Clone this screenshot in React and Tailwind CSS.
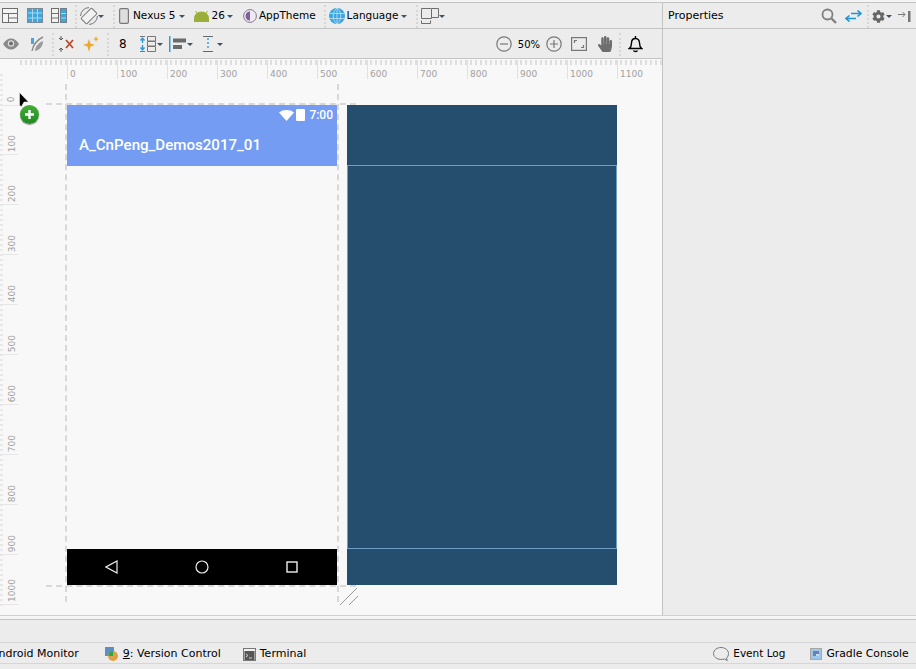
import { FaCog, FaHandPaper } from "react-icons/fa"

const hLabels = [0, 100, 200, 300, 400, 500, 600, 700, 800, 900, 1000, 1100]
const vLabels = [100, 200, 300, 400, 500, 600, 700, 800, 900, 1000]

function Caret({ className = "ml-[3px]" }) {
  return <span className={`${className} w-0 h-0 border-x-[3px] border-t-[3px] border-x-transparent border-t-[#3d5566]`} />
}

function Sep({ className = "" }) {
  return <span className={`${className} w-0 h-[23px] border-l-2 border-dotted border-[#d6d6d6]`} />
}

function DesignIcon() {
  return (
    <svg width="16" height="16" viewBox="0 0 16 16" fill="none" stroke="#6e6e6e">
      <rect x="0.5" y="0.5" width="15" height="14" fill="#f4f4f4" />
      <path d="M0.5 5.5h15M6.5 5.5v9M6.5 10h9" />
    </svg>
  )
}

function BlueprintIcon() {
  return (
    <svg width="16" height="16" viewBox="0 0 16 16">
      <rect x="0.5" y="0.5" width="15" height="14" fill="#3fa6dd" stroke="#7a8b96" />
      <path d="M1 5h14M1 10h14M5.500 1v13M10.500 1v13" stroke="#a8d8f0" strokeWidth="1" />
    </svg>
  )
}

function BothIcon() {
  return (
    <svg width="16" height="16" viewBox="0 0 16 16" fill="none">
      <rect x="0.5" y="0.5" width="7" height="14" fill="#f2f2f2" stroke="#6e6e6e" />
      <path d="M0.5 5.500h7M0.5 10h7" stroke="#6e6e6e" />
      <rect x="9.500" y="0.500" width="6" height="14" fill="#3fa6dd" stroke="#6e7f8a" />
      <path d="M10 5.500h5M10 10h5" stroke="#a8d8f0" />
    </svg>
  )
}

function RotateIcon() {
  return (
    <svg width="18" height="18" viewBox="0 0 18 18" fill="none" stroke="#777">
      <rect x="5" y="1.500" width="8" height="15" rx="1" transform="rotate(45 9 9)" fill="#f2f2f2" />
      <path d="M9 .6a8.400 8.400 0 0 0-8.400 8.400M9 17.400a8.400 8.400 0 0 0 8.400-8.400" />
    </svg>
  )
}

function PhoneIcon() {
  return (
    <svg width="10" height="16" viewBox="0 0 10 16" fill="#dedede" stroke="#777" strokeWidth="1.200">
      <rect x="0.600" y="0.600" width="8.800" height="14.800" rx="1.400" />
    </svg>
  )
}

function AndroidIcon() {
  return (
    <svg width="15" height="11" viewBox="0 0 15 11" fill="#9bae3a">
      <path d="M0 11V7.500a7.500 7 0 0 1 15 0V11z" />
      <path d="M1.500 0l3 4M13.500 0l-3 4" stroke="#9bae3a" strokeWidth="1" />
    </svg>
  )
}

function ThemeIcon() {
  return (
    <svg width="14" height="14" viewBox="0 0 14 14">
      <circle cx="7" cy="7" r="6.400" fill="#eee9f2" stroke="#85768f" />
      <path d="M7 2.500a4.500 4.500 0 0 0 0 9z" fill="#7f5f9c" />
    </svg>
  )
}

function GlobeIcon() {
  return (
    <svg width="16" height="16" viewBox="0 0 16 16" fill="none">
      <circle cx="8" cy="8" r="8" fill="#3da5df" />
      <path d="M0.500 5.500h15M0.500 10.500h15M8 0v16M8 0c-5 4-5 12 0 16M8 0c5 4 5 12 0 16" stroke="#bfe3f6" strokeWidth="0.800" />
    </svg>
  )
}

function LayoutIcon() {
  return (
    <svg width="18" height="18" viewBox="0 0 18 18" fill="none" stroke="#6e6e6e">
      <path d="M0.500 1.500h10v10h-10zM11 1.500h6.500v9H11M0.500 13.500v3h9v-3" />
    </svg>
  )
}

function EyeIcon() {
  return (
    <svg width="16" height="12" viewBox="0 0 16 12">
      <path d="M0 6c2-3.500 5-5.500 8-5.500S14 2.500 16 6c-2 3.500-5 5.500-8 5.500S2 9.500 0 6z" fill="#8a8a8a" />
      <circle cx="8" cy="5.500" r="3.200" fill="#dcdcdc" />
      <circle cx="8" cy="5.500" r="2" fill="#6e6e6e" />
    </svg>
  )
}

function AutoconnectIcon() {
  return (
    <svg width="14" height="16" viewBox="0 0 14 16" fill="none">
      <path d="M1 2h3v6H1z" fill="#4aa3d9" />
      <path d="M13 1C7 4 3 9 2 15" stroke="#8a8a8a" strokeWidth="1.400" />
      <path d="M13 5c0 5-3 9-8 10 0-4 3-8 8-10z" fill="#9a9a9a" />
    </svg>
  )
}

function ClearIcon() {
  return (
    <svg width="16" height="16" viewBox="0 0 16 16" fill="none">
      <path d="M3 0v4M1 2l2 2 2-2M3 16v-4M1 14l2-2 2 2" stroke="#555" strokeWidth="1" />
      <path d="M8 4l7 8M15 4l-7 8" stroke="#b8492f" strokeWidth="1.800" />
    </svg>
  )
}

function InferIcon() {
  return (
    <svg width="16" height="16" viewBox="0 0 16 16" fill="#eea82a">
      <path d="M6 3l1.500 4.500L12 9l-4.500 1.500L6 16l-1.500-5.500L0 9l4.500-1.500z" />
      <path d="M13 0l.8 2.200L16 3l-2.200.8L13 6l-.8-2.200L10 3l2.200-.8z" />
    </svg>
  )
}

function MarginIcon() {
  return (
    <svg width="17" height="16" viewBox="0 0 17 16" fill="none">
      <path d="M1 .5h5" stroke="#777" />
      <path d="M3.500 2v5M1.500 4.500l2-2.500 2 2.500" stroke="#2f9bd8" strokeWidth="1.400" />
      <path d="M3.500 14v-5M1.500 11.500l2 2.500 2-2.500" stroke="#2f9bd8" strokeWidth="1.400" />
      <path d="M1 15.500h5" stroke="#777" />
      <path d="M8.500 0.500h8v4.500h-8zM8.500 5.500h8v4.500h-8zM8.500 10.500h8v5h-8z" stroke="#777" />
    </svg>
  )
}

function AlignIcon() {
  return (
    <svg width="17" height="16" viewBox="0 0 17 16">
      <rect x="0" y="0" width="1.500" height="16" fill="#2f9bd8" />
      <rect x="4" y="2.500" width="13" height="4" fill="#6a6a6a" />
      <rect x="4" y="9" width="9" height="4" fill="#6a6a6a" />
    </svg>
  )
}

function GuideIcon() {
  return (
    <svg width="10" height="16" viewBox="0 0 10 16" fill="none">
      <path d="M0 .5h10M0 15.500h10" stroke="#666" />
      <path d="M5 2v12" stroke="#2f9bd8" strokeWidth="1.400" strokeDasharray="2 2" />
    </svg>
  )
}

function BellIcon() {
  return (
    <svg width="15" height="17" viewBox="0 0 15 17" fill="none" stroke="#000" strokeWidth="1.400">
      <path d="M7.500 2.500c-2.800 0-4 2-4 4.500 0 3-.9 4.500-2.200 5.500h12.400c-1.300-1-2.200-2.500-2.200-5.500 0-2.500-1.200-4.500-4-4.500z" />
      <path d="M7.500 0v2.500M5.500 14.500c.5 1.300 3.500 1.300 4 0" />
    </svg>
  )
}

function SearchIcon() {
  return (
    <svg width="16" height="16" viewBox="0 0 16 16" fill="none" stroke="#808080">
      <circle cx="6.500" cy="6.500" r="5" strokeWidth="1.800" />
      <path d="M10.500 10.500l4.500 4.500" strokeWidth="2.400" />
    </svg>
  )
}

function SwapIcon() {
  return (
    <svg width="17" height="12" viewBox="0 0 17 12" fill="none" stroke="#1f95d6" strokeWidth="1.600">
      <path d="M6 3.500h10M12.500 .5l3.500 3-3.500 3" />
      <path d="M11 8.500H1M4.500 5.500l-3.500 3 3.500 3" />
    </svg>
  )
}

function PinIcon() {
  return (
    <svg width="13" height="11" viewBox="0 0 13 11" fill="none" stroke="#777">
      <path d="M0 3.500h7M4.500 1l2.500 2.500L4.500 6" />
      <rect x="10" y="0" width="2.500" height="11" fill="#777" stroke="none" />
    </svg>
  )
}

function MonitorIcon() {
  return (
    <svg width="14" height="14" viewBox="0 0 14 14">
      <rect x="0" y="0" width="9" height="9" fill="#5f8fc0" />
      <circle cx="8" cy="9" r="5" fill="#e0a048" />
      <path d="M8 4a4.500 4.500 0 0 0-4.500 5H8z" fill="#2aa84a" />
    </svg>
  )
}

function TerminalIcon() {
  return (
    <svg width="13" height="13" viewBox="0 0 13 13">
      <rect x="0.500" y="0.500" width="12" height="12" fill="#f0f0f0" stroke="#777" />
      <rect x="1.500" y="3" width="10" height="9" fill="#555" />
      <path d="M3 6l2 1.500L3 9M6 10h3" stroke="#eee" strokeWidth="0.800" fill="none" />
    </svg>
  )
}

function GradleIcon() {
  return (
    <svg width="12" height="12" viewBox="0 0 12 12">
      <rect x="0" y="0" width="12" height="12" fill="#a8a8a8" />
      <rect x="1" y="1" width="10" height="10" fill="#9bc7e8" />
      <rect x="3" y="3" width="6" height="5" fill="#6f7fb4" />
      <rect x="6" y="6" width="3" height="2" fill="#c9d9ea" />
    </svg>
  )
}

function BubbleIcon() {
  return (
    <svg width="16" height="15" viewBox="0 0 16 15" fill="none" stroke="#777">
      <path d="M8 .5c4 0 7.500 2.500 7.500 6 0 2-.8 3.500-2 4.500l.8 2.500-3-1.500C6 13.500 .5 11 .5 6.500 .5 3 4 .5 8 .5z" />
    </svg>
  )
}

function Cursor() {
  return (
    <svg className="absolute left-[18px] top-[33px]" width="12" height="17" viewBox="0 0 12 17">
      <path d="M1.500 0.500l9 9.500H6l-2.500 4.500-2-1z" fill="#000" stroke="#fff" strokeWidth="0.500" />
    </svg>
  )
}

function AddBadge() {
  return (
    <div className="absolute left-[20px] top-[46px] w-[19px] h-[19px] rounded-full bg-gradient-to-b from-[#43ad38] to-[#1f8a20] shadow-[0_1px_1px_rgba(0,0,0,0.4)] flex items-center justify-center">
      <svg width="11" height="11" viewBox="0 0 11 11" fill="#fff">
        <path d="M4.300 1h2.400v3.300H10v2.400H6.700V10H4.300V6.700H1V4.300h3.300z" />
      </svg>
    </div>
  )
}

function NavBar() {
  return (
    <div className="h-[36px] bg-black flex items-center">
      <svg className="ml-[38px]" width="13" height="14" viewBox="0 0 13 14" fill="none" stroke="#eee" strokeWidth="1.200">
        <path d="M12 1v12L1 7z" />
      </svg>
      <svg className="ml-[77px]" width="14" height="14" viewBox="0 0 14 14" fill="none" stroke="#eee" strokeWidth="1.200">
        <circle cx="7" cy="7" r="6" />
      </svg>
      <svg className="ml-[77px]" width="12" height="12" viewBox="0 0 12 12" fill="none" stroke="#eee" strokeWidth="1.400">
        <rect x="1" y="1" width="10" height="10" />
      </svg>
    </div>
  )
}

function Phone() {
  return (
    <div className="absolute left-[67px] top-[46px] w-[270px] h-[480px] flex flex-col">
      <div className="h-[61px] bg-[#739cf2] flex flex-col text-white font-['Roboto',sans-serif]">
        <div className="h-[20px] flex items-center justify-end pr-[4px] gap-[2px]">
          <svg width="15" height="11" viewBox="0 0 15 11" fill="#fff">
            <path d="M0 2.500C2 .8 4.700 0 7.500 0S13 .8 15 2.500L7.500 11z" />
          </svg>
          <span className="w-[9px] h-[12px] bg-white rounded-[1px]" />
          <span className="ml-[2px] text-[12px] font-medium">7:00</span>
        </div>
        <div className="pl-[12px] mt-[10px] text-[15.100px] font-medium leading-[20px]">A_CnPeng_Demos2017_01</div>
      </div>
      <div className="flex-1 bg-[#f8f8f8]" />
      <NavBar />
    </div>
  )
}

function Blueprint() {
  return (
    <div className="absolute left-[347px] top-[46px] w-[270px] h-[480px] bg-[#254d6e] flex flex-col">
      <div className="h-[60px]" />
      <div className="h-[384px] border border-[#6f9fc4]" />
    </div>
  )
}

function Guides() {
  return (
    <>
      <div className="absolute left-[65px] top-[25px] h-[518px] border-l-2 border-dashed border-[#d8d8d8]" />
      <div className="absolute left-[337px] top-[25px] h-[518px] border-l-2 border-dashed border-[#d8d8d8]" />
      <div className="absolute left-[46px] top-[44px] w-[310px] border-t-2 border-dashed border-[#d8d8d8]" />
      <div className="absolute left-[46px] top-[526px] w-[310px] border-t-2 border-dashed border-[#d8d8d8]" />
      <svg className="absolute left-[340px] top-[528px]" width="18" height="18" viewBox="0 0 18 18" fill="none" stroke="#999">
        <path d="M0 18L17 1M9 18l9-9" />
      </svg>
    </>
  )
}

function Rulers() {
  return (
    <>
      <div className="absolute left-[20px] top-[1px] right-0 h-[5px] bg-[repeating-linear-gradient(90deg,#dedede_0,#dedede_2px,transparent_2px,transparent_5px)]" />
      <div className="absolute left-[67px] top-[1px] flex font-['DejaVu_Sans',sans-serif] text-[9px] text-[#a0a0a0]">
        {hLabels.map((n) => (
          <div key={n} className="w-[50px] h-[19px] border-l border-[#e0e0e0] pl-[2px] pt-[9px] leading-[11px]">{n}</div>
        ))}
      </div>
      <div className="absolute left-0 top-[15px] w-[3px] bottom-[8px] bg-[repeating-linear-gradient(180deg,#e8e8e8_0,#e8e8e8_2px,transparent_2px,transparent_5px)]" />
      <div className="absolute left-[9px] top-[35px] text-[9px] leading-[11px] text-[#a0a0a0] font-['DejaVu_Sans',sans-serif] rotate-[-90deg]">0</div>
      <div className="absolute left-0 top-[46px] w-[18px] border-t border-[#e6e6e6]" />
      {vLabels.map((n, i) => (
        <div
          key={n}
          className="absolute left-0 w-[18px] h-[50px] border-b border-[#e6e6e6] flex items-end justify-end font-['DejaVu_Sans',sans-serif] text-[9px] text-[#a0a0a0]"
          style={{ top: 46 + i * 50 }}
        >
          <span className="leading-[11px] mb-[2px] [writing-mode:vertical-rl] rotate-180">{n}</span>
        </div>
      ))}
    </>
  )
}

export default function App() {
  return (
    <div className="w-[916px] h-[669px] overflow-hidden bg-[#ececec] flex flex-col font-['DejaVu_Sans',sans-serif] text-[11px] text-black">
      <div className="h-[2px] bg-[#f4f4f4]" />
      <div className="flex flex-1 min-h-0 border-t border-[#c4c4c4]">
        {/* editor side */}
        <div className="w-[662px] flex flex-col">
          <div className="h-[26px] pt-[1px] flex items-center border-b border-[#c4c4c4] shrink-0 text-[10.500px]">
            <span className="ml-[2px]"><DesignIcon /></span>
            <span className="ml-[9px]"><BlueprintIcon /></span>
            <span className="ml-[8px]"><BothIcon /></span>
            <Sep className="ml-[8px]" />
            <span className="ml-[3px]"><RotateIcon /></span>
            <Caret className="ml-0" />
            <Sep className="ml-[9px]" />
            <span className="ml-[4px]"><PhoneIcon /></span>
            <span className="ml-[4px]">Nexus 5</span>
            <Caret />
            <span className="ml-[9px]"><AndroidIcon /></span>
            <span className="ml-[3px]">26</span>
            <Caret className="ml-[2px]" />
            <span className="ml-[10px]"><ThemeIcon /></span>
            <span className="ml-[2px]">AppTheme</span>
            <Sep className="ml-[8px]" />
            <span className="ml-[3px]"><GlobeIcon /></span>
            <span className="ml-[2px]">Language</span>
            <Caret />
            <Sep className="ml-[9px]" />
            <span className="ml-[3px]"><LayoutIcon /></span>
            <Caret className="ml-0" />
          </div>
          <div className="h-[30px] pt-[1px] flex items-center border-b border-[#c4c4c4] shrink-0">
            <span className="ml-[3px]"><EyeIcon /></span>
            <span className="ml-[11px]"><AutoconnectIcon /></span>
            <Sep className="ml-[8px]" />
            <span className="ml-[4px]"><ClearIcon /></span>
            <span className="ml-[9px]"><InferIcon /></span>
            <Sep className="ml-[8px]" />
            <span className="ml-[10px] font-medium text-[12px]">8</span>
            <span className="ml-[12px]"><MarginIcon /></span>
            <Caret className="ml-[1px]" />
            <span className="ml-[6px]"><AlignIcon /></span>
            <Caret className="ml-[1px]" />
            <span className="ml-[10px]"><GuideIcon /></span>
            <Caret className="ml-[4px]" />
            <div className="ml-auto flex items-center pr-[19px]">
              <svg width="16" height="16" viewBox="0 0 16 16" fill="none" stroke="#777" strokeWidth="1.200">
                <circle cx="8" cy="8" r="7.200" />
                <path d="M4 8h8" />
              </svg>
              <span className="ml-[6px] text-[10px]">50%</span>
              <svg className="ml-[6px]" width="16" height="16" viewBox="0 0 16 16" fill="none" stroke="#777" strokeWidth="1.200">
                <circle cx="8" cy="8" r="7.200" />
                <path d="M4 8h8M8 4v8" />
              </svg>
              <svg className="ml-[9px]" width="16" height="14" viewBox="0 0 16 14" fill="none" stroke="#777" strokeWidth="1.200">
                <rect x="0.600" y="0.600" width="14.800" height="12.800" />
                <path d="M3.500 6V3.500H6M12.500 8v2.500H10" />
              </svg>
              <FaHandPaper className="ml-[10px] text-[#6e6e6e]" size={16} />
              <Sep className="ml-[6px]" />
              <span className="ml-[7px]"><BellIcon /></span>
            </div>
          </div>
          {/* design surface */}
          <div className="relative flex-1 bg-[#f8f8f8]">
            <Rulers />
            <Phone />
            <Blueprint />
            <Guides />
            <AddBadge />
            <Cursor />
          </div>
        </div>
        {/* properties */}
        <div className="flex-1 flex flex-col border-l border-[#c4c4c4]">
          <div className="h-[26px] pt-[1px] flex items-center border-b border-[#c4c4c4] pl-[5px] pr-[5px]">
            <span>Properties</span>
            <span className="ml-auto"><SearchIcon /></span>
            <span className="ml-[8px]"><SwapIcon /></span>
            <Sep className="ml-[5px] h-[14px]" />
            <FaCog className="ml-[3px] text-[#666]" size={13} />
            <Caret className="ml-[1px]" />
            <span className="ml-[6px]"><PinIcon /></span>
          </div>
        </div>
      </div>
      {/* bottom */}
      <div className="h-[3px] border-t border-b border-t-[#d0d0d0] border-b-[#c4c4c4] bg-[#f5f5f5] box-content shrink-0" />
      <div className="h-[22px] shrink-0" />
      <div className="h-[22px] shrink-0 border-y border-[#d6d6d6] flex items-center whitespace-nowrap pt-[2px]">
        <span className="ml-[-9px]">Android Monitor</span>
        <span className="ml-[26px]"><MonitorIcon /></span>
        <span className="ml-[4px]"><span className="underline">9</span>: Version Control</span>
        <span className="ml-[22px]"><TerminalIcon /></span>
        <span className="ml-[4px]">Terminal</span>
        <span className="ml-[407px]"><BubbleIcon /></span>
        <span className="ml-[4px] text-[10.500px]">Event Log</span>
        <span className="ml-[25px]"><GradleIcon /></span>
        <span className="ml-[4px] text-[10.800px]">Gradle Console</span>
      </div>
      <div className="h-[5px] shrink-0" />
    </div>
  )
}
